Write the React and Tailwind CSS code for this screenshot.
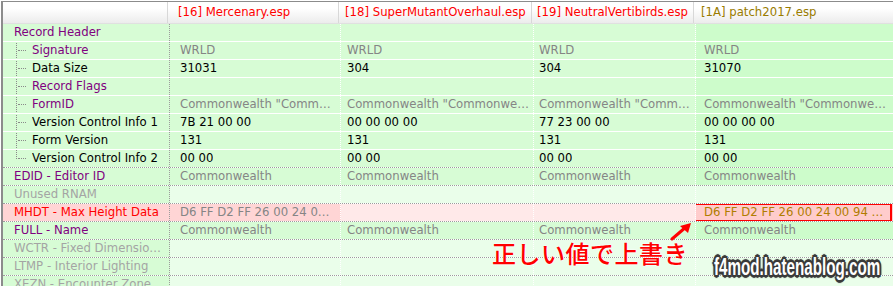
import React from "react";

const COLS = [
  { w: "w-[171px]", pl: "pl-[10px]", hpl: "pl-[10px]" },
  { w: "w-[193px]", pl: "pl-[6px]", hpl: "pl-[6px]" },
  { w: "w-[162px]", pl: "pl-[5px]", hpl: "pl-[5px]" },
  { w: "flex-1", pl: "pl-[8px]", hpl: "pl-[7px]" },
];

const PURPLE = "text-[#800080]";
const BLACK = "text-black";
const GRAYL = "text-[#a4a4a4]";
const RED = "text-[#ff0000]";
const GRAYV = "text-[#858585]";

const CW = 'Commonwealth "Commonwealth"';

const rows = [
  { label: "Record Header", lc: PURPLE, level: 0, vals: ["", "", "", ""], vc: BLACK, kind: "g", sep: "w" },
  { label: "Signature", lc: PURPLE, level: 1, vals: ["WRLD", "WRLD", "WRLD", "WRLD"], vc: GRAYV, kind: "g", sep: "w" },
  { label: "Data Size", lc: BLACK, level: 1, vals: ["31031", "304", "304", "31070"], vc: BLACK, kind: "g", sep: "w" },
  { label: "Record Flags", lc: PURPLE, level: 1, vals: ["", "", "", ""], vc: BLACK, kind: "g", sep: "w" },
  { label: "FormID", lc: PURPLE, level: 1, vals: [CW, CW, CW, CW], vc: GRAYV, kind: "g", sep: "w" },
  { label: "Version Control Info 1", lc: BLACK, level: 1, vals: ["7B 21 00 00", "00 00 00 00", "77 23 00 00", "00 00 00 00"], vc: BLACK, kind: "g", sep: "w" },
  { label: "Form Version", lc: BLACK, level: 1, vals: ["131", "131", "131", "131"], vc: BLACK, kind: "g", sep: "w" },
  { label: "Version Control Info 2", lc: BLACK, level: 1, last: true, vals: ["00 00", "00 00", "00 00", "00 00"], vc: BLACK, kind: "g", sep: "g" },
  { label: "EDID - Editor ID", lc: PURPLE, level: 0, vals: ["Commonwealth", "Commonwealth", "Commonwealth", "Commonwealth"], vc: GRAYV, kind: "g", sep: "g" },
  { label: "Unused RNAM", lc: GRAYL, level: 0, vals: ["", "", "", ""], vc: BLACK, kind: "l", sep: "g" },
  { label: "MHDT - Max Height Data", lc: RED, level: 0, vals: ["D6 FF D2 FF 26 00 24 00 94 9B", "", "", "D6 FF D2 FF 26 00 24 00 94 9B 00 00"], vc: GRAYV, kind: "p", sep: "g" },
  { label: "FULL - Name", lc: PURPLE, level: 0, vals: ["Commonwealth", "Commonwealth", "Commonwealth", "Commonwealth"], vc: GRAYV, kind: "g", sep: "g" },
  { label: "WCTR - Fixed Dimensions Center Cell", lc: GRAYL, level: 0, vals: ["", "", "", ""], vc: BLACK, kind: "l", sep: "g" },
  { label: "LTMP - Interior Lighting", lc: GRAYL, level: 0, vals: ["", "", "", ""], vc: BLACK, kind: "l", sep: "g" },
  { label: "XEZN - Encounter Zone", lc: GRAYL, level: 0, vals: ["", "", "", ""], vc: BLACK, kind: "l", sep: "g" },
];

function cellBg(kind, i) {
  if (kind === "g") return i === 3 ? "bg-[#cdfccb]" : "bg-[#d7fcd5]";
  if (kind === "l") return "bg-[#eafeea]";
  if (kind === "p") {
    if (i === 0) return "bg-[#ffd5d5]";
    if (i === 3) return "bg-[#ffcccc]";
    return "bg-[#ffe9e9]";
  }
  return "";
}

function Row({ r }) {
  const sepCls =
    r.sep === "w"
      ? "border-b border-dotted border-white"
      : "border-b border-dotted border-[#9c9c9c]";
  const labelBg = r.kind === "p" ? "bg-[#ffd5d5]" : "bg-[#d7fcd5]";
  return (
    <div className={`flex h-[18px] ${sepCls}`}>
      <div
        className={`relative w-[167px] shrink-0 ${labelBg} border-r border-dotted border-[#9c9c9c] flex items-center ${
          r.level === 0 ? "pl-[11px]" : "pl-[29px]"
        } pr-1 overflow-hidden`}
      >
        {r.level === 1 && (
          <>
            <span
              className={`absolute left-[13px] top-[-1px] border-l border-dotted border-[#8a8a8a] ${
                r.last ? "h-[10px]" : "h-[19px]"
              }`}
            />
            <span className="absolute left-[15px] top-[8px] w-[8px] border-t border-dotted border-[#8a8a8a]" />
          </>
        )}
        <span className={`${r.lc} whitespace-nowrap overflow-hidden text-ellipsis`}>{r.label}</span>
      </div>
      {r.vals.map((v, i) => (
        <div
          key={i}
          className={`relative ${COLS[i].w} shrink-0 ${COLS[i].pl} pr-1 ${cellBg(r.kind, i)} ${
            i < 3 ? "border-r border-dotted border-white" : ""
          } flex items-center overflow-hidden`}
        >
          <span
            className={`whitespace-nowrap overflow-hidden text-ellipsis ${
              r.kind === "p" && i === 3 ? "text-[#b07d00]" : r.vc
            }`}
          >
            {v}
          </span>
          {r.kind === "p" && i === 3 && (
            <span className="absolute left-[-3px] top-[-1px] right-[1px] bottom-[-1px] border-2 border-[#ff0000]" />
          )}
        </div>
      ))}
    </div>
  );
}

export default function App() {
  return (
    <div
      className="relative w-[893px] h-[286px] overflow-hidden bg-white text-[11.7px]"
      style={{ fontFamily: '"DejaVu Sans", Verdana, sans-serif' }}
    >
      <div className="mt-px ml-[1px] border-t border-l-2 border-[#8c8c8c] h-[285px] overflow-hidden">
        {/* header */}
        <div className="flex h-[22px] bg-gradient-to-b from-white from-30% to-[#ececec] border-b border-[#e0e0e0]">
          <div className="w-[165px] shrink-0 border-r border-[#d8d8d8]" />
          {[
            ["[16] Mercenary.esp", "text-[#ff0000]"],
            ["[18] SuperMutantOverhaul.esp", "text-[#ff0000]"],
            ["[19] NeutralVertibirds.esp", "text-[#ff0000]"],
            ["[1A] patch2017.esp", "text-[#9a7c00]"],
          ].map(([t, c], i) => (
            <div
              key={i}
              className={`${COLS[i].w} shrink-0 ${COLS[i].hpl} ${
                i < 3 ? "border-r border-[#d8d8d8]" : ""
              } flex items-center whitespace-nowrap overflow-hidden ${c}`}
            >
              {t}
            </div>
          ))}
        </div>
        {rows.map((r, i) => (
          <Row key={i} r={r} />
        ))}
      </div>

      {/* annotation */}
      <svg className="absolute left-[664px] top-[220px]" width="30" height="24" viewBox="0 0 30 24">
        <line x1="8" y1="19" x2="22" y2="7" stroke="#ff0000" strokeWidth="3" strokeLinecap="round" />
        <polygon points="27,3 16,6 24,13" fill="#ff0000" />
      </svg>
      <div
        className="absolute left-[492px] top-[241px] text-[24px] leading-none font-medium text-[#ff0000] whitespace-nowrap tracking-[0.5px]"
        style={{ fontFamily: '"Noto Sans CJK JP", sans-serif', textShadow: "0 0 2px #fff, 0 0 2px #fff" }}
      >
        正しい値で上書き
      </div>
      <div
        className="absolute left-[714px] top-[256px] text-[23px] leading-none font-bold text-white whitespace-nowrap origin-left scale-x-[0.66]"
        style={{
          fontFamily: '"Liberation Sans", Arial, sans-serif',
          textShadow:
            "2px 0 0 #3a3a3a, -2px 0 0 #3a3a3a, 0 2px 0 #3a3a3a, 0 -2px 0 #3a3a3a, 2px 2px 0 #3a3a3a, -2px -2px 0 #3a3a3a, 2px -2px 0 #3a3a3a, -2px 2px 0 #3a3a3a, 3px 0 1px #3a3a3a, -3px 0 1px #3a3a3a, 0 3px 1px #3a3a3a, 0 -3px 1px #3a3a3a",
        }}
      >
        f4mod.hatenablog.com
      </div>
    </div>
  );
}
